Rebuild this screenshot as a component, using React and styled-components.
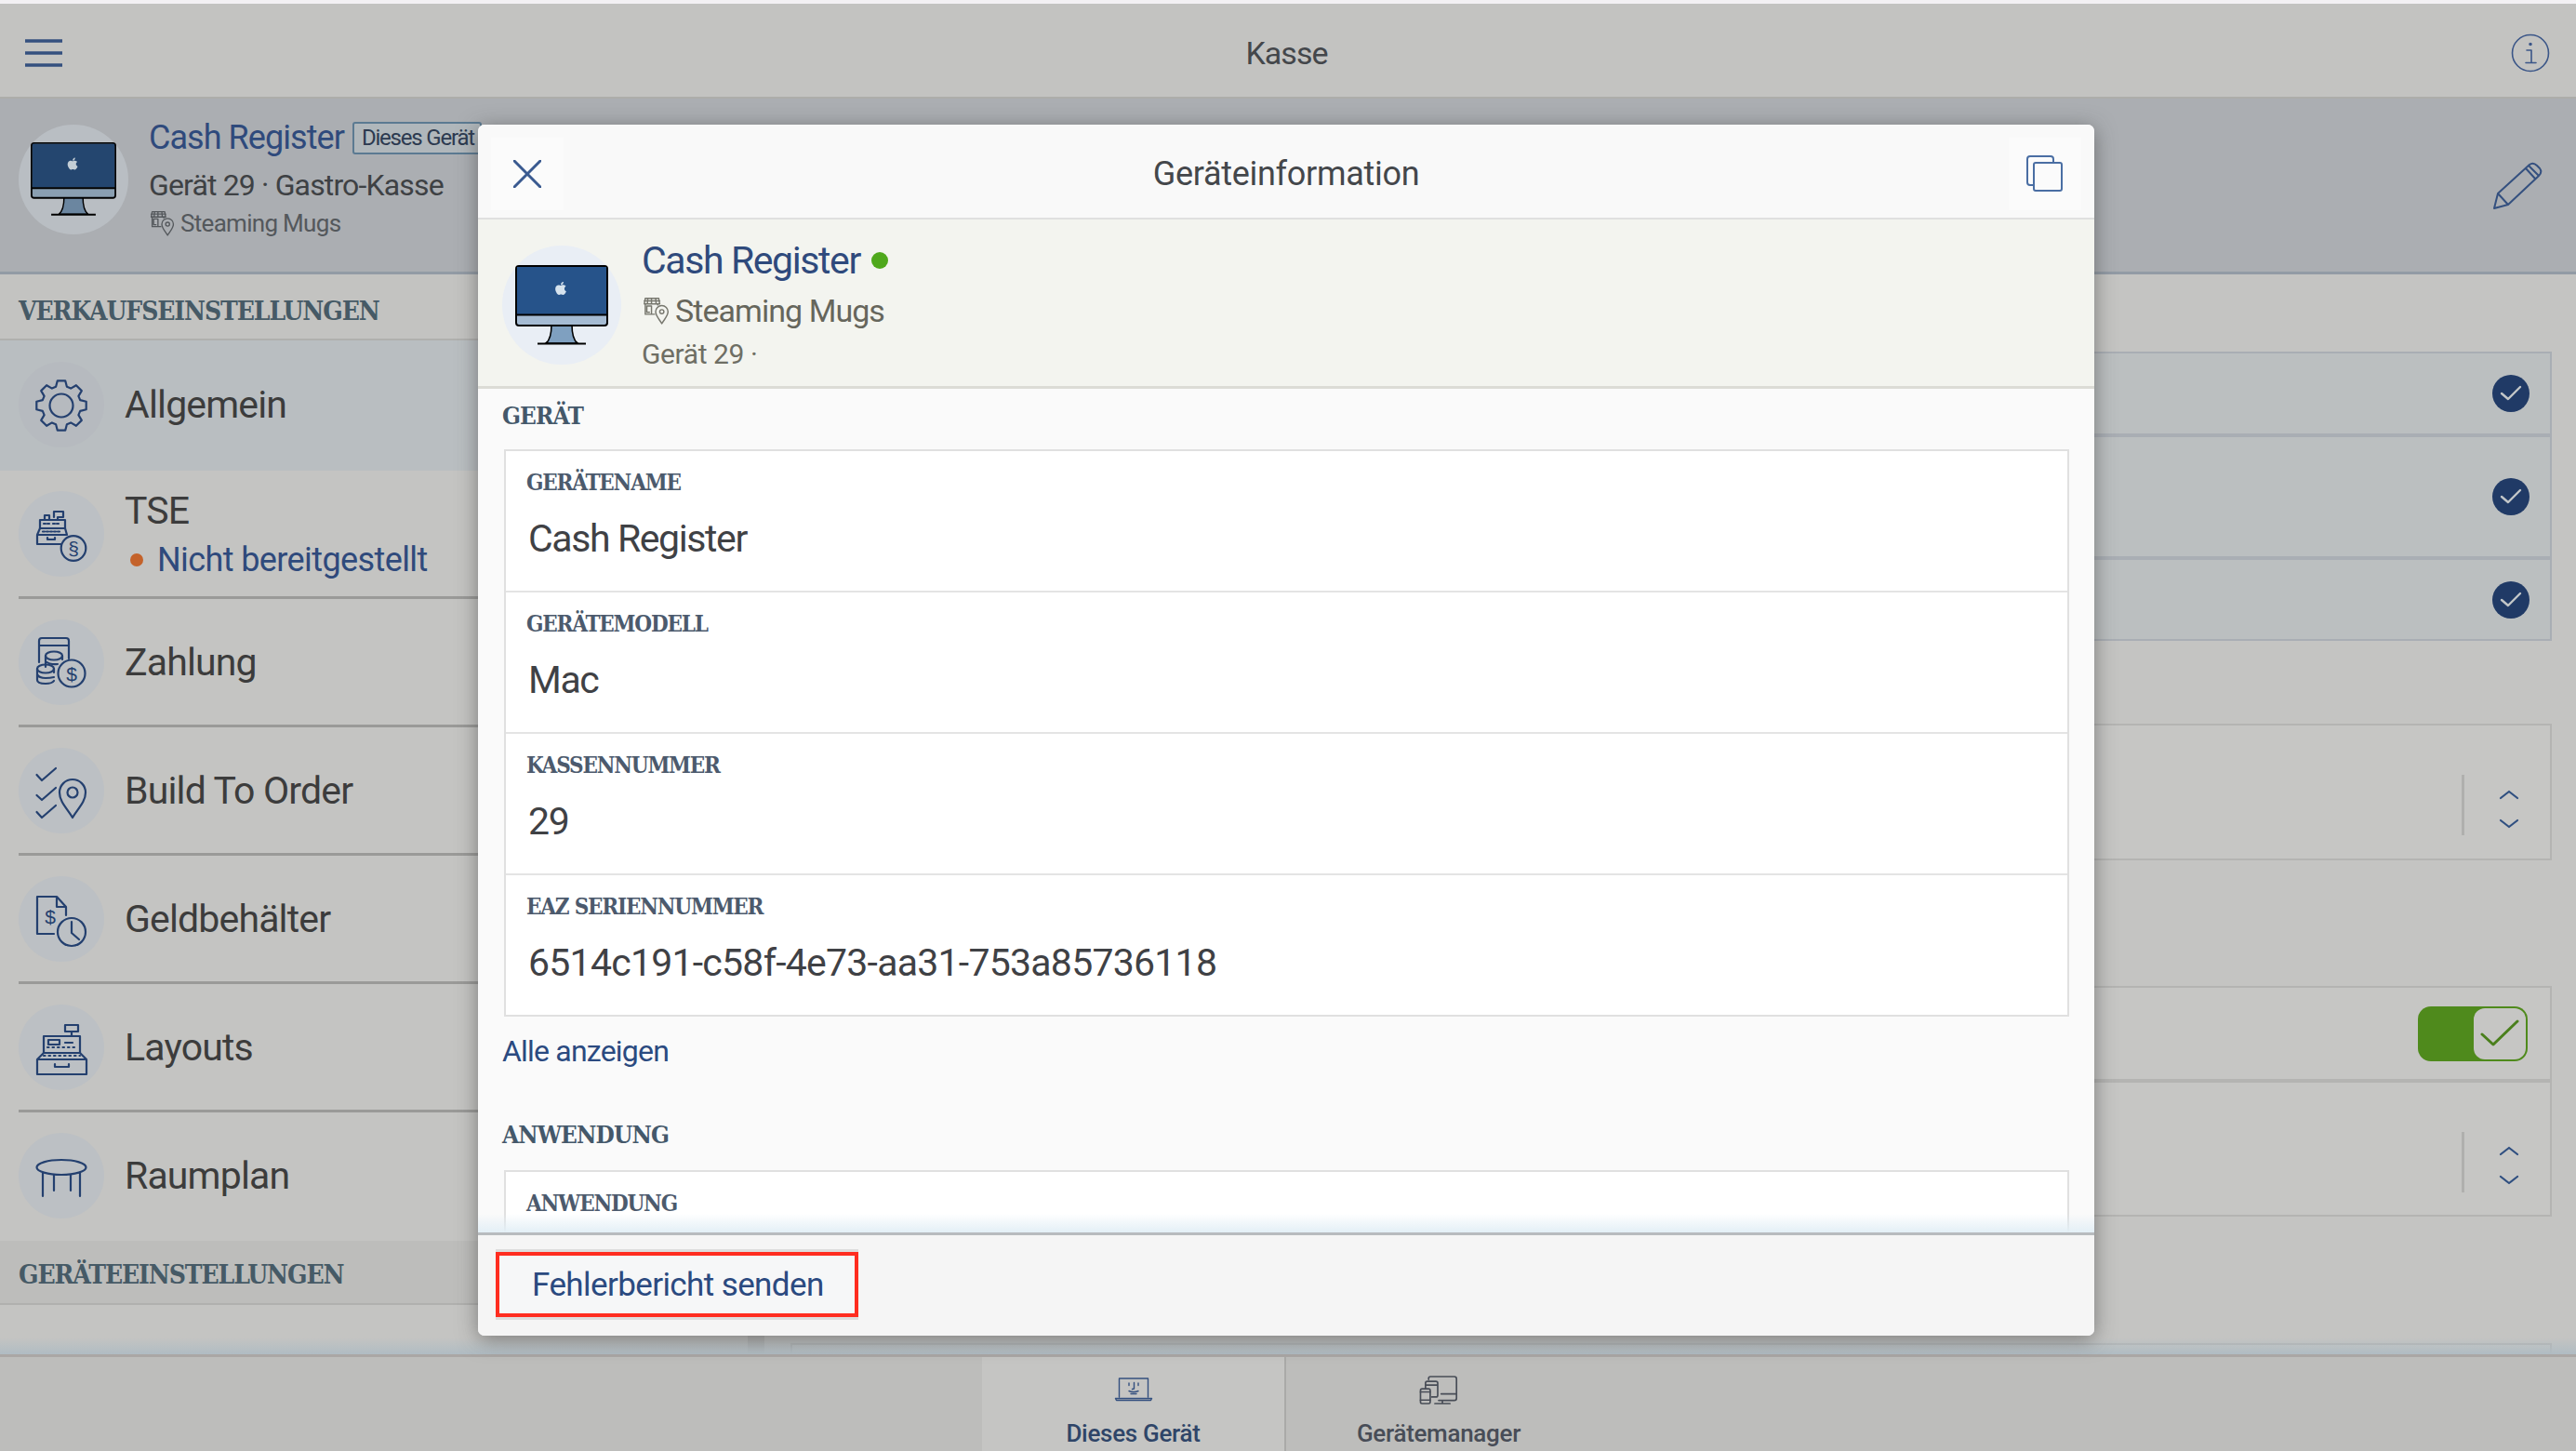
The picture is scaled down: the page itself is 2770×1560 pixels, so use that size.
import React from "react";
import styled, { createGlobalStyle } from "styled-components";
import { FaApple } from "react-icons/fa";

const sans = `Roboto, "Noto Sans", sans-serif`;
const slab = `"DejaVu Serif Condensed", "DejaVu Serif", serif`;

const Global = createGlobalStyle`
  html, body { margin: 0; padding: 0; background: #c4c4c2; }
  * { box-sizing: border-box; }
  body { font-family: ${sans}; }
`;

const Page = styled.div`
  position: relative;
  width: 2770px;
  height: 1560px;
  display: flex;
  flex-direction: column;
  overflow: hidden;
  background: #c4c4c2;
`;

const TopStrip = styled.div`
  height: 4px;
  background: #f3f1f4;
`;

const Header = styled.header`
  height: 102px;
  display: flex;
  align-items: center;
  justify-content: space-between;
  padding: 6px 28px 0 27px;
  background: #c3c3c1;
  border-bottom: 2px solid #adadaa;
`;

const HeaderTitle = styled.div`
  font-size: 34px;
  letter-spacing: -1px;
  color: #44474b;
`;

const DeviceBar = styled.div`
  height: 189px;
  display: flex;
  align-items: flex-start;
  justify-content: space-between;
  padding: 28px 36px 0 20px;
  background: #abaeb2;
  border-bottom: 3px solid #929ba5;
`;

const DeviceLeft = styled.div`
  display: flex;
  gap: 22px;
`;

const Avatar = styled.div`
  width: ${(p) => p.$size}px;
  height: ${(p) => p.$size}px;
  flex: none;
  display: flex;
  align-items: center;
  justify-content: center;
  border-radius: 50%;
  background: ${(p) => p.$bg};
`;

const DeviceText = styled.div`
  display: flex;
  flex-direction: column;
  margin-top: ${(p) => p.$top}px;
`;

const NameRow = styled.div`
  display: flex;
  align-items: center;
  gap: ${(p) => p.$gap}px;
  height: 38px;
`;

const BarName = styled.div`
  font-size: 36px;
  letter-spacing: -0.95px;
  color: #2f4a7c;
`;

const Badge = styled.div`
  height: 35px;
  display: flex;
  align-items: center;
  padding: 0 6px 0 8px;
  font-size: 24px;
  letter-spacing: -1.2px;
  white-space: nowrap;
  color: #2c3a50;
  background: #b0b7bb;
  border: 2px solid #5b7a92;
  border-radius: 3px;
`;

const BarSub = styled.div`
  margin-top: 13px;
  font-size: 32px;
  line-height: 38px;
  letter-spacing: -0.85px;
  color: #3e4144;
`;

const StoreLine = styled.div`
  display: flex;
  align-items: center;
  gap: 6px;
  margin-top: ${(p) => p.$top}px;
  font-size: ${(p) => p.$size}px;
  line-height: ${(p) => p.$size + 6}px;
  letter-spacing: ${(p) => p.$track}px;
  color: ${(p) => p.$color};
`;

const Body = styled.div`
  position: relative;
  flex: 1;
  min-height: 0;
  display: flex;
  overflow: hidden;
  &::after {
    content: "";
    position: absolute;
    left: 0;
    right: 0;
    bottom: 0;
    height: 18px;
    background: linear-gradient(rgba(176, 190, 198, 0), #b0bcc3);
  }
`;

const Sidebar = styled.aside`
  width: 822px;
  flex: none;
  border-right: 18px solid #b6b6b4;
`;

const SectionLabel = styled.div`
  height: ${(p) => p.$height}px;
  display: flex;
  align-items: center;
  padding: ${(p) => p.$top}px 0 0 20px;
  font-family: ${slab};
  font-size: 28px;
  font-weight: 700;
  letter-spacing: -1.1px;
  color: #465a66;
  background: ${(p) => p.$bg};
  border-bottom: 2px solid #b0b0ae;
`;

const NavRow = styled.div`
  position: relative;
  height: ${(p) => p.$height || 138}px;
  display: flex;
  align-items: center;
  gap: 22px;
  margin-left: ${(p) => (p.$active ? 0 : 20)}px;
  padding-left: ${(p) => (p.$active ? 20 : 0)}px;
  background: ${(p) => (p.$active ? "#b9bec1" : "transparent")};
  border-bottom: 3px solid ${(p) => (p.$last ? "transparent" : "#9a9a98")};
`;

const NavName = styled.div`
  font-size: 41px;
  line-height: 48px;
  letter-spacing: -0.85px;
  color: #3c3c3c;
`;

const NavStack = styled.div`
  display: flex;
  flex-direction: column;
`;

const TseStatus = styled.div`
  display: flex;
  align-items: center;
  gap: 15px;
  margin: 8px 0 0 6px;
  font-size: 36px;
  line-height: 42px;
  letter-spacing: -0.6px;
  color: #2f4a7c;
`;

const Dot = styled.span`
  width: ${(p) => p.$size}px;
  height: ${(p) => p.$size}px;
  flex: none;
  border-radius: 50%;
  background: ${(p) => p.$color};
`;

const Main = styled.main`
  flex: 1;
  padding: 83px 26px 0 28px;
`;

const SettingCard = styled.div`
  height: ${(p) => p.$height}px;
  display: flex;
  align-items: center;
  justify-content: flex-end;
  margin-top: ${(p) => p.$gap || 0}px;
  padding-right: ${(p) => p.$pad}px;
  background: ${(p) => (p.$tint ? "#bbbfc0" : "#c6c6c4")};
  border: 2px solid ${(p) => (p.$tint ? "#a9aeb4" : "#b4b4b2")};
`;

const CheckMark = styled.div`
  width: 40px;
  height: 40px;
  display: flex;
  align-items: center;
  justify-content: center;
  border-radius: 50%;
  background: #203a66;
`;

const StepperBox = styled.div`
  display: flex;
  align-items: center;
  justify-content: flex-end;
  width: 95px;
  height: 65px;
  margin-top: 28px;
  padding: 8px 33px 0 0;
  border-left: 3px solid #b0b0ae;
`;

const Toggle = styled.div`
  width: 118px;
  height: 59px;
  padding: 2px;
  display: flex;
  justify-content: flex-end;
  border-radius: 14px;
  background: #4f8a1c;
`;

const ToggleKnob = styled.div`
  width: 56px;
  height: 55px;
  display: flex;
  align-items: center;
  justify-content: center;
  border-radius: 12px;
  background: #c6c6c4;
`;

const TabBar = styled.nav`
  height: 104px;
  display: flex;
  padding-left: 1056px;
  background: #bdbdbb;
  border-top: 3px solid #aaa7a5;
`;

const Tab = styled.div`
  width: ${(p) => p.$width}px;
  display: flex;
  flex-direction: column;
  align-items: center;
  padding-top: 19px;
  background: ${(p) => (p.$active ? "#c5c5c3" : "transparent")};
  border-right: ${(p) => (p.$active ? "2px solid #aaaaa8" : "0")};
`;

const TabLabel = styled.div`
  margin-top: ${(p) => (p.$active ? 16 : 13)}px;
  font-size: 26px;
  font-weight: 500;
  line-height: 34px;
  letter-spacing: -0.3px;
  color: ${(p) => (p.$active ? "#2f4568" : "#484d57")};
`;

const Modal = styled.section`
  position: absolute;
  left: 514px;
  top: 134px;
  width: 1738px;
  height: 1302px;
  display: flex;
  flex-direction: column;
  overflow: hidden;
  background: #fafafa;
  border-radius: 7px;
  box-shadow: 0 4px 22px rgba(60, 60, 60, 0.55);
`;

const ModalHeader = styled.div`
  height: 102px;
  flex: none;
  display: flex;
  align-items: center;
  justify-content: space-between;
  padding: 6px 14px 0 14px;
  background: #f9f9f9;
  border-bottom: 2px solid #e0e0e0;
`;

const HeaderButton = styled.div`
  width: 78px;
  height: 78px;
  display: flex;
  align-items: center;
  justify-content: center;
  background: #fbfbfb;
`;

const ModalTitle = styled.div`
  font-size: 36px;
  letter-spacing: -0.3px;
  color: #44474b;
`;

const DeviceInfo = styled.div`
  height: 182px;
  flex: none;
  display: flex;
  gap: 22px;
  padding: 28px 0 0 26px;
  background: #f3f4ef;
  border-bottom: 3px solid #dcdcd6;
`;

const ModalName = styled.div`
  font-size: 41px;
  line-height: 46px;
  letter-spacing: -1.4px;
  color: #2f4a7c;
`;

const SmallLine = styled.div`
  margin-top: 10px;
  font-size: 30px;
  line-height: 34px;
  letter-spacing: -0.4px;
  color: #6e6e64;
`;

const ModalBody = styled.div`
  position: relative;
  flex: 1;
  min-height: 0;
  overflow: hidden;
  padding: 0 27px 0 26px;
  &::after {
    content: "";
    position: absolute;
    left: 0;
    right: 0;
    bottom: 0;
    height: 20px;
    background: linear-gradient(rgba(225, 240, 248, 0), #e3eff6);
  }
`;

const GroupHead = styled.div`
  height: ${(p) => p.$height}px;
  padding-top: ${(p) => p.$top}px;
  font-family: ${slab};
  font-size: 26px;
  line-height: 36px;
  font-weight: 700;
  letter-spacing: -0.9px;
  color: #44586a;
`;

const InfoCard = styled.div`
  margin-left: 2px;
  background: #fff;
  border: 2px solid #e0e0e0;
`;

const InfoRow = styled.div`
  height: 152px;
  padding: 17px 0 0 22px;
  border-bottom: 2px solid #e4e4e4;
  &:last-child {
    height: 150px;
    border-bottom: 0;
  }
`;

const InfoLabel = styled.div`
  font-family: ${slab};
  font-size: 24px;
  line-height: 34px;
  font-weight: 700;
  letter-spacing: -1.2px;
  color: #4c5a6d;
`;

const InfoValue = styled.div`
  margin: 15px 0 0 2px;
  font-size: 41px;
  line-height: 56px;
  letter-spacing: ${(p) => p.$track}px;
  color: #3f4145;
`;

const AllLink = styled.div`
  height: 74px;
  display: flex;
  align-items: center;
  font-size: 32px;
  letter-spacing: -0.8px;
  color: #2b4a80;
`;

const ModalFooter = styled.div`
  height: 111px;
  flex: none;
  padding: 18px 0 0 19px;
  background: #f5f5f5;
  border-top: 3px solid #b7bbbe;
`;

const ReportButton = styled.div`
  width: 390px;
  height: 70px;
  display: flex;
  align-items: center;
  padding-left: 35px;
  font-size: 35px;
  letter-spacing: -0.6px;
  white-space: nowrap;
  color: #2b4a80;
  background: #f6f7f8;
  border: 4px solid #ff2d20;
  box-shadow: 0 -3px 0 #dddddd, 0 3px 0 #dddddd;
`;

const Ic = styled.svg`
  display: block;
  flex: none;
  fill: none;
  stroke: ${(p) => p.$color || "#24406f"};
  stroke-linecap: round;
  stroke-linejoin: round;
`;

function Monitor({ width, dim }) {
  const c = dim
    ? { blue: "#24466f", low: "#8a9fb1", stand: "#6b86a0", apple: "#c3ced6" }
    : { blue: "#26538a", low: "#a5bbd3", stand: "#7fa0c0", apple: "#d6e3ee" };
  return (
    <svg width={width} viewBox="0 0 100 86" style={{ display: "block" }}>
      <path d="M39 64 C39 76 37 81 33 84 H67 C63 81 61 76 61 64 Z" fill={c.stand} stroke="#000" strokeWidth="1.6" />
      <path d="M24 84.5 H76" stroke="#000" strokeWidth="2" />
      <rect x="1" y="1" width="98" height="64" rx="3" fill={c.low} stroke="#000" strokeWidth="2" />
      <path d="M2 2 H98 V53 H2 Z" fill={c.blue} />
      <path d="M1 53.5 H99" stroke="#000" strokeWidth="2.2" />
      <FaApple x="41" y="17" width="18" height="20" color={c.apple} />
    </svg>
  );
}

function StorePin({ size, color }) {
  return (
    <Ic $color={color} width={size} height={size} viewBox="10 6 26 27" strokeWidth="1.3">
      <path d="M12 13 L13 7.5 H26 L27 13 Z M15.5 7.5 L15 13 M19 7.5 V13 M23 7.5 L23.5 13 M12 10 H27" />
      <path d="M13 13 V23 H22 M14.5 15 H19 V23 M14.5 15 V21 H17 M25 13 V14" />
      <path d="M29 32 C26 27 23 24.5 23 20.5 A6 6 0 0 1 35 20.5 C35 24.5 32 27 29 32 Z" />
      <circle cx="29" cy="20.5" r="2" />
    </Ic>
  );
}

function gearPath(cx, cy, outer, inner) {
  const teeth = 8;
  const pts = [];
  for (let i = 0; i < teeth; i++) {
    const a = (i / teeth) * Math.PI * 2 - Math.PI / 2;
    const step = (Math.PI * 2) / teeth;
    [
      [inner, -0.36],
      [outer, -0.2],
      [outer, 0.2],
      [inner, 0.36],
    ].forEach(([r, f]) => {
      pts.push(`${(cx + r * Math.cos(a + f * step)).toFixed(1)} ${(cy + r * Math.sin(a + f * step)).toFixed(1)}`);
    });
  }
  return `M${pts.join(" L")} Z`;
}

function GearIcon() {
  return (
    <Ic width="92" height="92" viewBox="0 0 92 92" strokeWidth="2.2">
      <path d={gearPath(46, 47, 27, 21)} />
      <circle cx="46" cy="47" r="12.5" />
    </Ic>
  );
}

const Glyph = styled.text`
  font-family: "Liberation Sans", sans-serif;
  font-size: ${(p) => p.$size}px;
  fill: #24406f;
  stroke: none;
  text-anchor: middle;
`;

function TseIcon() {
  return (
    <Ic width="92" height="92" viewBox="0 0 92 92" strokeWidth="2.2">
      <g transform="translate(10 2)">
        <path d="M13 29 V38 H40 V29 Z M18 29 V24 H23 V29 M28 26 V20 H38 V26 H32 V29" />
        <path d="M13 38 L10 45 H42 L40 38 Z M10 45 V55 H36 M21 48 V50 H29 V48" />
        <path d="M17 33 H23 M27 33 H34 M16 41.5 H36" strokeDasharray="2 2" />
        <circle cx="49" cy="59.5" r="13.3" />
        <Glyph x="49" y="67" $size="21">§</Glyph>
      </g>
    </Ic>
  );
}

function CoinsIcon() {
  return (
    <Ic width="92" height="92" viewBox="0 0 92 92" strokeWidth="2.2">
      <g transform="translate(10 2)">
        <path d="M12 44 V21 Q12 18 15 18 H41 Q44 18 44 21 V40 M12 26 H44" />
        <ellipse cx="28" cy="37" rx="9" ry="4.5" />
        <path d="M19 37 V49 M37 37 V41 M19 43 Q24 47 32 46" />
        <ellipse cx="19" cy="51" rx="9" ry="4.5" />
        <path d="M10 51 V63 Q10 67 19 67 Q26 67 28 64 M10 57 Q12 61 19 61 Q24 61 28 60 M28 51 V55" />
        <circle cx="47" cy="56" r="14.5" />
        <Glyph x="47" y="63.5" $size="21">$</Glyph>
      </g>
    </Ic>
  );
}

function ChecksIcon() {
  return (
    <Ic width="92" height="92" viewBox="0 0 92 92" strokeWidth="2.2">
      <g transform="translate(10 -4)">
        <path d="M9.5 33 L15 39 L30 26 M9.5 55 L15 60 L30 47 M9.5 73 L15 79 L30 66" />
        <path d="M48 79 C42 69 34 62 34 52 A14 14 0 0 1 62 52 C62 62 54 69 48 79 Z" />
        <circle cx="48" cy="52" r="5.5" />
      </g>
    </Ic>
  );
}

function DocIcon() {
  return (
    <Ic width="92" height="92" viewBox="0 0 92 92" strokeWidth="2.2">
      <g transform="translate(10 -142)">
        <path d="M28 204 H10 V164 H31 L41 175 V184 M31 164 V175 H41" />
        <Glyph x="24" y="193" $size="21">$</Glyph>
        <circle cx="47" cy="202" r="15" />
        <path d="M47 191 V203 L55 210" />
      </g>
    </Ic>
  );
}

function RegisterIcon() {
  return (
    <Ic width="92" height="92" viewBox="0 0 92 92" strokeWidth="2.2">
      <path d="M50 22 H64 V29 H50 Z M57 29 V34 M27 34 H66 V52 H27 Z" />
      <path d="M32 38 H44 V43 H32 Z M50 41 H58" />
      <path d="M27 52 L20 59 V75 H73 V59 L66 52 M20 59 H73 M39 64 V67 H54 V64" />
      <path d="M31 46 H62 M27 55 H66" strokeDasharray="1.5 4" />
    </Ic>
  );
}

function TableIcon() {
  return (
    <Ic width="92" height="92" viewBox="0 0 92 92" strokeWidth="2.2">
      <ellipse cx="46" cy="37" rx="26.5" ry="8" />
      <path d="M26 43 V68 M66 43 V68 M38 45 V62 M56 45 V62" />
    </Ic>
  );
}

function LaptopIcon() {
  return (
    <Ic $color="#34507f" width="44" height="30" viewBox="18 12 44 30" strokeWidth="1.4">
      <path d="M24.5 36 V16 H55.5 V36 M20.5 37.5 H59.5 L58.5 39.5 H21.5 Z" />
      <path d="M35 21 V23.5 M45 21 V23.5 M40.5 20.5 V27 L38.5 27.5 M35 29.5 Q40 31.5 45 29.5 M37 32.5 H43" />
    </Ic>
  );
}

function DevicesIcon() {
  return (
    <Ic $color="#484d57" width="44" height="33" viewBox="1040 35 128 98" strokeWidth="5">
      <path d="M1072 50 V46 Q1072 41 1078 41 H1154 Q1161 41 1161 48 V110 Q1161 117 1154 117 H1104 M1112 96 H1161 M1116 117 V127 M1092 127 H1140" />
      <path d="M1062 78 V62 Q1062 56 1068 56 H1095 Q1101 56 1101 62 V100 Q1101 106 1095 106 H1082 M1062 68 H1101" />
      <rect x="1046" y="80" width="31" height="47" rx="5" />
      <path d="M1046 90 H1077 M1046 116 H1077" />
    </Ic>
  );
}

function Chevrons() {
  return (
    <Ic $color="#2f4f80" width="22" height="44" viewBox="0 0 22 44" strokeWidth="2.2">
      <path d="M2 10 L11 3 L20 10 M2 34 L11 41 L20 34" />
    </Ic>
  );
}

function Check() {
  return (
    <Ic $color="#c2c6c8" width="24" height="20" viewBox="0 0 24 20" strokeWidth="2.4">
      <path d="M2 10 L9 16 L22 3" />
    </Ic>
  );
}

const NAV = [
  { name: "Zahlung", Icon: CoinsIcon },
  { name: "Build To Order", Icon: ChecksIcon },
  { name: "Geldbehälter", Icon: DocIcon },
  { name: "Layouts", Icon: RegisterIcon },
  { name: "Raumplan", Icon: TableIcon },
];

const DEVICE_ROWS = [
  { label: "GERÄTENAME", value: "Cash Register", track: -1.4 },
  { label: "GERÄTEMODELL", value: "Mac", track: -1.4 },
  { label: "KASSENNUMMER", value: "29", track: -1.4 },
  { label: "EAZ SERIENNUMMER", value: "6514c191-c58f-4e73-aa31-753a85736118", track: -0.75 },
];

export default function App() {
  return (
    <>
      <Global />
      <Page>
        <TopStrip />
        <Header>
          <Ic $color="#34507f" width="40" height="30" viewBox="0 0 40 30" strokeWidth="3.6" strokeLinecap="butt">
            <path d="M0 2 H40 M0 15 H40 M0 28 H40" />
          </Ic>
          <HeaderTitle>Kasse</HeaderTitle>
          <Ic $color="#3b5688" width="42" height="42" viewBox="0 0 42 42" strokeWidth="1.6">
            <circle cx="21" cy="21" r="19.5" />
            <path d="M17 18 H22 V31 M16 31.5 H27" />
            <circle cx="21" cy="11.5" r="1" fill="#3b5688" />
          </Ic>
        </Header>
        <DeviceBar>
          <DeviceLeft>
            <Avatar $size={118} $bg="#b9bec3">
              <Monitor width={92} dim />
            </Avatar>
            <DeviceText $top={-5}>
              <NameRow $gap={9}>
                <BarName>Cash Register</BarName>
                <Badge>Dieses Gerät</Badge>
              </NameRow>
              <BarSub>Gerät 29 · Gastro-Kasse</BarSub>
              <StoreLine $top={6} $size={26} $track={-0.7} $color="#54585c">
                <StorePin size={28} color="#54585c" />
                Steaming Mugs
              </StoreLine>
            </DeviceText>
          </DeviceLeft>
          <Ic $color="#34507f" width="54" height="54" viewBox="0 0 54 54" strokeWidth="2" style={{ marginTop: 38 }}>
            <path d="M2 52 L6 36 L40 5 Q44 2 48 6 L51 9 Q54 13 50 17 L17 48 Z M6 36 L17 48 M36 9 L46 20 M39 6 L50 17" />
          </Ic>
        </DeviceBar>
        <Body>
          <Sidebar>
            <SectionLabel $height={71} $top={10} $bg="#c3c3c1">VERKAUFSEINSTELLUNGEN</SectionLabel>
            <NavRow $active $last $height={140}>
              <Avatar $size={92} $bg="#b6babf"><GearIcon /></Avatar>
              <NavName>Allgemein</NavName>
            </NavRow>
            <NavRow>
              <Avatar $size={92} $bg="#bcc0c4"><TseIcon /></Avatar>
              <NavStack>
                <NavName>TSE</NavName>
                <TseStatus>
                  <Dot $size={14} $color="#c4622a" />
                  Nicht bereitgestellt
                </TseStatus>
              </NavStack>
            </NavRow>
            {NAV.map(({ name, Icon }, i) => (
              <NavRow key={name} $last={i === NAV.length - 1}>
                <Avatar $size={92} $bg="#bcc0c4"><Icon /></Avatar>
                <NavName>{name}</NavName>
              </NavRow>
            ))}
            <SectionLabel $height={69} $top={5} $bg="#bdbdbb">GERÄTEEINSTELLUNGEN</SectionLabel>
          </Sidebar>
          <Main>
            <SettingCard $height={90} $pad={22} $tint><CheckMark><Check /></CheckMark></SettingCard>
            <SettingCard $height={132} $pad={22} $tint><CheckMark><Check /></CheckMark></SettingCard>
            <SettingCard $height={89} $pad={22} $tint><CheckMark><Check /></CheckMark></SettingCard>
            <SettingCard $height={147} $pad={0} $gap={89}>
              <StepperBox><Chevrons /></StepperBox>
            </SettingCard>
            <SettingCard $height={102} $pad={24} $gap={135}>
              <Toggle>
                <ToggleKnob>
                  <Ic $color="#4a7f1c" width="42" height="30" viewBox="0 0 42 30" strokeWidth="3" strokeLinecap="butt">
                    <path d="M2 16 L14 27 L40 2" />
                  </Ic>
                </ToggleKnob>
              </Toggle>
            </SettingCard>
            <SettingCard $height={146} $pad={0}>
              <StepperBox><Chevrons /></StepperBox>
            </SettingCard>
            <SettingCard $height={60} $pad={0} $gap={136} />
          </Main>
        </Body>
        <TabBar>
          <Tab $active $width={327}>
            <LaptopIcon />
            <TabLabel $active>Dieses Gerät</TabLabel>
          </Tab>
          <Tab $width={328}>
            <DevicesIcon />
            <TabLabel>Gerätemanager</TabLabel>
          </Tab>
        </TabBar>

        <Modal>
          <ModalHeader>
            <HeaderButton>
              <Ic $color="#3a5a90" width="30" height="30" viewBox="0 0 30 30" strokeWidth="3" strokeLinecap="butt">
                <path d="M1 1 L29 29 M29 1 L1 29" />
              </Ic>
            </HeaderButton>
            <ModalTitle>Geräteinformation</ModalTitle>
            <HeaderButton>
              <Ic $color="#4a6ea3" width="40" height="40" viewBox="0 0 40 40" strokeWidth="2">
                <path d="M8 32 H4 Q1 32 1 29 V4 Q1 1 4 1 H26 Q29 1 29 4 V8" />
                <rect x="8" y="8" width="30" height="30" rx="2" />
              </Ic>
            </HeaderButton>
          </ModalHeader>
          <DeviceInfo>
            <Avatar $size={128} $bg="#e9eef5">
              <Monitor width={100} />
            </Avatar>
            <DeviceText $top={-3}>
              <NameRow $gap={12}>
                <ModalName>Cash Register</ModalName>
                <Dot $size={18} $color="#4fa81c" />
              </NameRow>
              <StoreLine $top={15} $size={34} $track={-0.95} $color="#66665c">
                <StorePin size={30} color="#77776e" />
                Steaming Mugs
              </StoreLine>
              <SmallLine>Gerät 29 ·</SmallLine>
            </DeviceText>
          </DeviceInfo>
          <ModalBody>
            <GroupHead $height={65} $top={11}>GERÄT</GroupHead>
            <InfoCard>
              {DEVICE_ROWS.map((r) => (
                <InfoRow key={r.label}>
                  <InfoLabel>{r.label}</InfoLabel>
                  <InfoValue $track={r.track}>{r.value}</InfoValue>
                </InfoRow>
              ))}
            </InfoCard>
            <AllLink>Alle anzeigen</AllLink>
            <GroupHead $height={91} $top={35}>ANWENDUNG</GroupHead>
            <InfoCard>
              <InfoRow>
                <InfoLabel>ANWENDUNG</InfoLabel>
              </InfoRow>
            </InfoCard>
          </ModalBody>
          <ModalFooter>
            <ReportButton>Fehlerbericht senden</ReportButton>
          </ModalFooter>
        </Modal>
      </Page>
    </>
  );
}
